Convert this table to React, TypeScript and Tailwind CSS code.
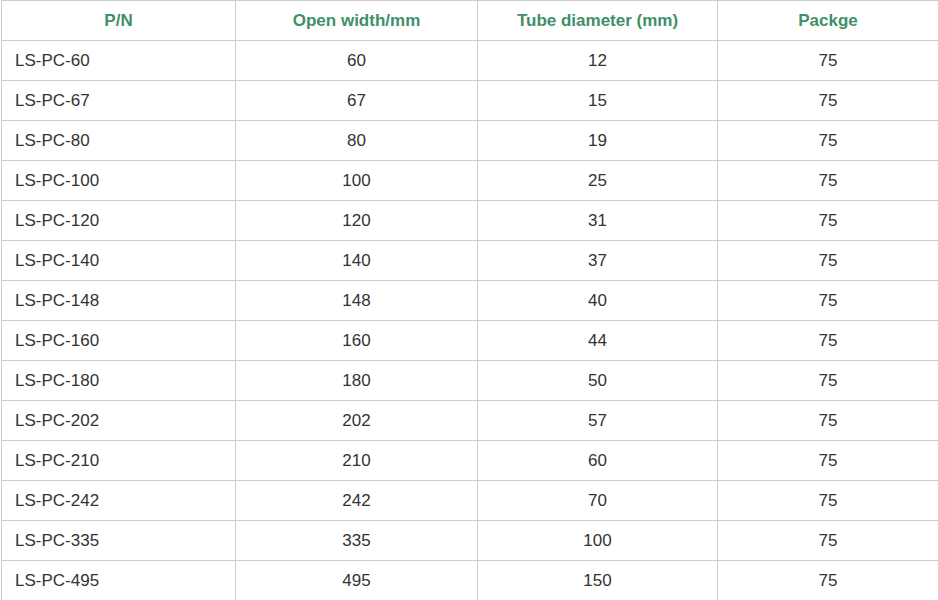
import React from "react";

const rows: [string, string, string, string][] = [
  ["LS-PC-60", "60", "12", "75"],
  ["LS-PC-67", "67", "15", "75"],
  ["LS-PC-80", "80", "19", "75"],
  ["LS-PC-100", "100", "25", "75"],
  ["LS-PC-120", "120", "31", "75"],
  ["LS-PC-140", "140", "37", "75"],
  ["LS-PC-148", "148", "40", "75"],
  ["LS-PC-160", "160", "44", "75"],
  ["LS-PC-180", "180", "50", "75"],
  ["LS-PC-202", "202", "57", "75"],
  ["LS-PC-210", "210", "60", "75"],
  ["LS-PC-242", "242", "70", "75"],
  ["LS-PC-335", "335", "100", "75"],
  ["LS-PC-495", "495", "150", "75"],
];

export default function App() {
  return (
    <div className="bg-white w-[938px] h-[600px] overflow-hidden" style={{ fontFamily: '"Liberation Sans", Arial, sans-serif' }}>
      <table className="ml-[1px] border-separate border-spacing-0 table-fixed w-[937px] text-[17px] text-[#333333]">
        <colgroup>
          <col className="w-[234px]" />
          <col className="w-[242px]" />
          <col className="w-[240px]" />
          <col className="w-[221px]" />
        </colgroup>
        <thead>
          <tr>
            {["P/N", "Open width/mm", "Tube diameter (mm)", "Packge"].map((h) => (
              <th key={h} className="h-[40px] border-l border-t border-[#cccccc] text-center font-bold text-[#3f8f68] p-0">
                {h}
              </th>
            ))}
          </tr>
        </thead>
        <tbody>
          {rows.map((r) => (
            <tr key={r[0]}>
              <td className="h-[40px] border-l border-t border-[#cccccc] pl-[13px] text-left p-0">{r[0]}</td>
              <td className="h-[40px] border-l border-t border-[#cccccc] text-center p-0">{r[1]}</td>
              <td className="h-[40px] border-l border-t border-[#cccccc] text-center p-0">{r[2]}</td>
              <td className="h-[40px] border-l border-t border-[#cccccc] text-center p-0">{r[3]}</td>
            </tr>
          ))}
        </tbody>
      </table>
    </div>
  );
}
